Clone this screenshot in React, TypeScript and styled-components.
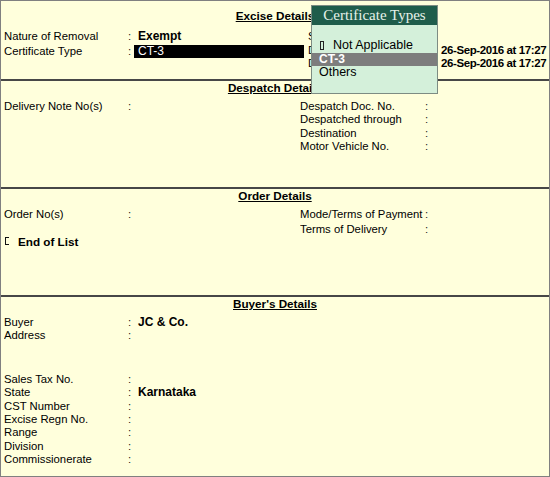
import React from "react";
import styled, { createGlobalStyle } from "styled-components";

const GlobalStyle = createGlobalStyle`
    html, body {
        margin: 0;
        padding: 0;
        background: #ffffff;
    }
    body {
        font-family: "Liberation Sans", Arial, sans-serif;
    }
`;

const Screen = styled.div`
    position: relative;
    box-sizing: border-box;
    width: 550px;
    height: 477px;
    border: 1px solid #808080;
    background: #ffffdc;
    color: #000;
    display: flex;
    flex-direction: column;
    font-family: "Liberation Sans", Arial, sans-serif;
    font-size: 11.3px;
    overflow: hidden;
`;

const Section = styled.section<{ $height?: number; $first?: boolean }>`
    box-sizing: border-box;
    height: ${props => (props.$height ? `${props.$height}px` : "auto")};
    flex: ${props => (props.$height ? "none" : 1)};
    border-top: ${props => (props.$first ? "none" : "2px solid #474747")};
    padding-top: ${props => (props.$first ? 8 : 0)}px;
    display: flex;
    flex-direction: column;
`;

const Title = styled.h4<{ $gap: number }>`
    margin: 0 0 ${props => props.$gap}px;
    text-align: center;
    font-size: 11.7px;
    font-weight: 700;
    line-height: 14px;
    text-decoration: underline;
`;

const Columns = styled.div<{ $split: number }>`
    display: grid;
    grid-template-columns: ${props => props.$split}px 1fr;
    padding-left: 3px;
`;

const Column = styled.div`
    display: flex;
    flex-direction: column;
`;

const Row = styled.div<{ $label: number; $colon: number; $gapTop?: number }>`
    display: grid;
    grid-template-columns: ${props => props.$label}px ${props => props.$colon}px 1fr;
    height: 13.4px;
    line-height: 13.4px;
    margin-top: ${props => props.$gapTop || 0}px;
    white-space: nowrap;
`;

const Label = styled.span`
    overflow: hidden;
`;

const Colon = styled.span`
    color: #222;
`;

const Value = styled.span<{ $tight?: boolean }>`
    font-weight: 700;
    font-size: ${props => (props.$tight ? 11.5 : 12)}px;
    letter-spacing: ${props => (props.$tight ? -0.4 : 0)}px;
`;

const Highlight = styled.span`
    display: block;
    box-sizing: border-box;
    width: 170px;
    height: 13px;
    margin-left: -4px;
    padding-left: 4px;
    background: #000;
    color: #fff;
    font-size: 12px;
    line-height: 13px;
`;

const ListEnd = styled.div`
    margin-top: 13.4px;
    height: 13.4px;
    line-height: 13.4px;
    font-weight: 700;
    font-size: 11.7px;
    display: flex;
    align-items: center;
`;

const Bracket = styled.span`
    display: inline-block;
    box-sizing: border-box;
    width: 4px;
    height: 8px;
    border: 1.5px solid #111;
    border-right: none;
    margin: 0 9px 0 1px;
`;

const Popup = styled.div`
    position: absolute;
    left: 310px;
    top: 4px;
    width: 127px;
    box-sizing: border-box;
    border: 1px solid #7d8c83;
    background: #d4f0da;
`;

const PopupTitle = styled.div`
    height: 19px;
    background: #1f5d4b;
    color: #e6f2ea;
    font-family: "Liberation Serif", "Times New Roman", serif;
    font-size: 15px;
    line-height: 19px;
    text-align: center;
    white-space: nowrap;
`;

const PopupList = styled.ul`
    list-style: none;
    margin: 0;
    padding: 14px 0 13px;
`;

const PopupItem = styled.li<{ $selected?: boolean }>`
    display: flex;
    align-items: center;
    height: 13.7px;
    line-height: 13.7px;
    padding-left: 7px;
    background: ${props => (props.$selected ? "#7d7d7d" : "transparent")};
    color: ${props => (props.$selected ? "#fff" : "#000")};
    font-weight: ${props => (props.$selected ? 700 : 400)};
    font-size: ${props => (props.$selected ? 12 : 12.5)}px;
    white-space: nowrap;
`;

const Marker = styled.span`
    display: inline-block;
    box-sizing: border-box;
    width: 4px;
    height: 9px;
    border: 1.5px solid #222;
    margin: 0 9px 0 1px;
`;

interface IField {
    label: string;
    value?: string;
    gapTop?: number;
    highlight?: boolean;
    tight?: boolean;
}

interface IFieldListProps {
    fields: IField[];
    label: number;
    colon: number;
}

const FieldList: React.FC<IFieldListProps> = ({ fields, label, colon }) => (
    <>
        {fields.map(field => (
            <Row key={field.label} $label={label} $colon={colon} $gapTop={field.gapTop}>
                <Label>{field.label}</Label>
                <Colon>:</Colon>
                {field.highlight ? (
                    <Highlight>{field.value}</Highlight>
                ) : (
                    <Value $tight={field.tight}>{field.value}</Value>
                )}
            </Row>
        ))}
    </>
);

const exciseLeft: IField[] = [
    { label: "Nature of Removal", value: "Exempt" },
    { label: "Certificate Type", value: "CT-3", highlight: true, gapTop: 2 },
];

const exciseRight: IField[] = [
    { label: "Serial No." },
    { label: "Date & Time of Invoice", value: "26-Sep-2016 at 17:27", tight: true, gapTop: 1 },
    { label: "Date & Time of Removal", value: "26-Sep-2016 at 17:27", tight: true, gapTop: -1 },
];

const despatchRight: IField[] = [
    { label: "Despatch Doc. No." },
    { label: "Despatched through" },
    { label: "Destination" },
    { label: "Motor Vehicle No." },
];

const orderRight: IField[] = [
    { label: "Mode/Terms of Payment" },
    { label: "Terms of Delivery", gapTop: 1.5 },
];

const buyer: IField[] = [
    { label: "Buyer", value: "JC & Co." },
    { label: "Address" },
    { label: "Sales Tax No.", gapTop: 30 },
    { label: "State", value: "Karnataka" },
    { label: "CST Number" },
    { label: "Excise Regn No." },
    { label: "Range" },
    { label: "Division" },
    { label: "Commissionerate" },
];

const certificateTypes = ["Not Applicable", "CT-3", "Others"];

const App: React.FC = () => {
    const [selected] = React.useState<string>("CT-3");

    return (
        <>
            <GlobalStyle />
            <Screen>
                <Section $first $height={78}>
                    <Title $gap={7}>Excise Details</Title>
                    <Columns $split={304}>
                        <Column>
                            <FieldList fields={exciseLeft} label={124} colon={10} />
                        </Column>
                        <Column>
                            <FieldList fields={exciseRight} label={125} colon={8} />
                        </Column>
                    </Columns>
                </Section>

                <Section $height={108}>
                    <Title $gap={5}>Despatch Details</Title>
                    <Columns $split={296}>
                        <Column>
                            <FieldList fields={[{ label: "Delivery Note No(s)" }]} label={124} colon={10} />
                        </Column>
                        <Column>
                            <FieldList fields={despatchRight} label={125} colon={16} />
                        </Column>
                    </Columns>
                </Section>

                <Section $height={108}>
                    <Title $gap={5}>Order Details</Title>
                    <Columns $split={296}>
                        <Column>
                            <FieldList fields={[{ label: "Order No(s)" }]} label={124} colon={10} />
                            <ListEnd>
                                <Bracket />
                                End of List
                            </ListEnd>
                        </Column>
                        <Column>
                            <FieldList fields={orderRight} label={125} colon={16} />
                        </Column>
                    </Columns>
                </Section>

                <Section>
                    <Title $gap={5}>Buyer's Details</Title>
                    <Columns $split={296}>
                        <Column>
                            <FieldList fields={buyer} label={124} colon={10} />
                        </Column>
                    </Columns>
                </Section>

                <Popup>
                    <PopupTitle>Certificate Types</PopupTitle>
                    <PopupList>
                        {certificateTypes.map((type, i) => (
                            <PopupItem key={type} $selected={type === selected}>
                                {i === 0 && <Marker />}
                                {type}
                            </PopupItem>
                        ))}
                    </PopupList>
                </Popup>
            </Screen>
        </>
    );
};

export default App;
